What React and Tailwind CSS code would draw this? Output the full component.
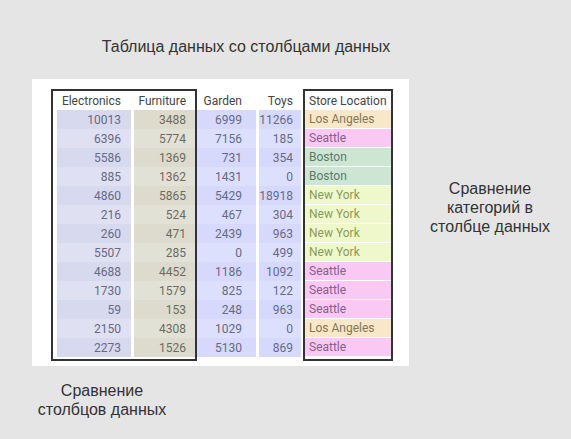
import React from "react";

const rows = [
  [10013, 3488, 6999, 11266, "Los Angeles"],
  [6396, 5774, 7156, 185, "Seattle"],
  [5586, 1369, 731, 354, "Boston"],
  [885, 1362, 1431, 0, "Boston"],
  [4860, 5865, 5429, 18918, "New York"],
  [216, 524, 467, 304, "New York"],
  [260, 471, 2439, 963, "New York"],
  [5507, 285, 0, 499, "New York"],
  [4688, 4452, 1186, 1092, "Seattle"],
  [1730, 1579, 825, 122, "Seattle"],
  [59, 153, 248, 963, "Seattle"],
  [2150, 4308, 1029, 0, "Los Angeles"],
  [2273, 1526, 5130, 869, "Seattle"],
];

const cityStyle = {
  "Los Angeles": "bg-[#f8e7c8] text-[#857658]",
  Seattle: "bg-[#f9c9f3] text-[#85608a]",
  Boston: "bg-[#cde6d4] text-[#5e7868]",
  "New York": "bg-[#eff8cb] text-[#8b9a5a]",
};

function NumCol({ header, idx, width, pr, even, odd, text }) {
  return (
    <div className={`flex flex-col ${width}`}>
      <div className={`h-[19px] flex items-center justify-end ${pr} text-[#454545]`}>{header}</div>
      {rows.map((r, i) => (
        <div
          key={i}
          className={`h-[19px] flex items-center justify-end ${pr} ${text} ${i % 2 === 0 ? even : odd}`}
        >
          {r[idx]}
        </div>
      ))}
    </div>
  );
}

export default function App() {
  return (
    <div className="w-[571px] h-[439px] bg-[#e5e5e5] flex flex-col text-[#333333] [font-family:'Liberation_Sans',Arial,sans-serif]">
      <div className="mt-[37px] ml-[96px] w-[300px] text-center text-[16px] leading-[20px]">
        Таблица данных со столбцами данных
      </div>
      <div className="flex mt-[22px]">
        <div className="ml-[32px] w-[377px] h-[287px] bg-white pl-[19px] pt-[10px]">
          <div className="flex items-start text-[12px] [font-family:Roboto,sans-serif]">
            <div className="flex gap-[3px] border-2 border-[#333333] pl-[4px] pb-[2px]">
              <NumCol
                header="Electronics"
                idx={0}
                width="w-[74px]"
                pr="pr-[10px]"
                even="bg-[#d7d9ee]"
                odd="bg-[#dfe0f1]"
                text="text-[#666a86]"
              />
              <NumCol
                header="Furniture"
                idx={1}
                width="w-[61px]"
                pr="pr-[9px]"
                even="bg-[#dcdbcd]"
                odd="bg-[#e2e1d6]"
                text="text-[#6c6b62]"
              />
            </div>
            <div className="flex gap-[3px] pt-[2px]">
              <NumCol
                header="Garden"
                idx={2}
                width="w-[59px]"
                pr="pr-[14px]"
                even="bg-[#d6d9fb]"
                odd="bg-[#dde0fd]"
                text="text-[#666a86]"
              />
              <NumCol
                header="Toys"
                idx={3}
                width="w-[42px]"
                pr="pr-[8px]"
                even="bg-[#d6d9fb]"
                odd="bg-[#dde0fd]"
                text="text-[#666a86]"
              />
            </div>
            <div className="ml-[2px] border-2 border-[#333333] pb-[2px] flex flex-col w-[90px]">
              <div className="h-[19px] flex items-center pl-[4px] text-[#454545]">Store Location</div>
              {rows.map((r, i) => (
                <div
                  key={i}
                  className={`h-[19px] flex items-center pl-[4px] border-b border-white ${cityStyle[r[4]]}`}
                >
                  {r[4]}
                </div>
              ))}
            </div>
          </div>
        </div>
        <div className="flex-1 pt-[100px] text-center text-[16px] leading-[19px]">
          Сравнение
          <br />
          категорий в
          <br />
          столбце данных
        </div>
      </div>
      <div className="mt-[15px] ml-[32px] w-[140px] text-center text-[16px] leading-[19px]">
        Сравнение
        <br />
        столбцов данных
      </div>
    </div>
  );
}
